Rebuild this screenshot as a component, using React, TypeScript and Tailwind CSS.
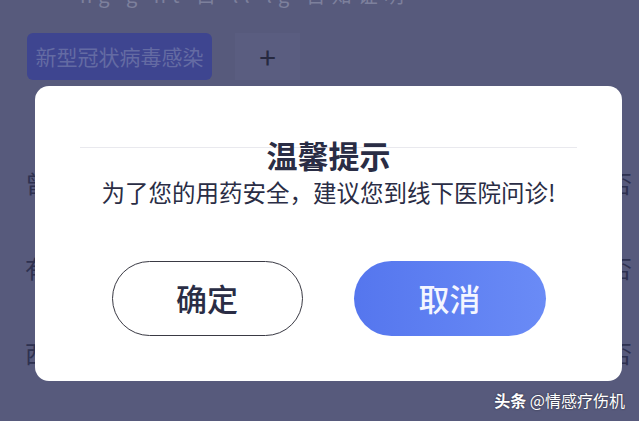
const rows = ["曾", "有", "西"];

const App = () => {
  return (
    <div
      className="relative w-[639px] h-[421px] overflow-hidden bg-[#575a7c]"
      style={{ fontFamily: '"Noto Sans CJK SC", "Noto Sans", sans-serif' }}
    >
      {/* page behind the overlay, top line scrolled mostly out of view */}
      <div className="-mt-[17px] h-[24px] pl-[80px] text-[20px] leading-[24px] text-[#7d809c] tracking-[6px]">
        ng g nt 目 ll lg 告知证明
      </div>

      <div className="flex mt-[26px] pl-[27px]">
        <div className="flex items-center justify-center w-[185px] h-[47px] rounded-[6px] bg-[#3e4590] text-[21px] text-[#646ba3]">
          新型冠状病毒感染
        </div>
        <div className="flex items-center justify-center w-[65px] h-[47px] ml-[23px] bg-[#5a5d80] text-[30px] text-[#262940]">
          +
        </div>
      </div>

      <div className="flex flex-col gap-[55px] mt-[88px]">
        {rows.map((r) => (
          <div key={r} className="flex justify-between pl-[25px] pr-[7px] h-[30px] text-[24px] leading-[30px] text-[#2e3150]">
            <span>{r}</span>
            <span>否</span>
          </div>
        ))}
      </div>

      {/* dialog */}
      <div className="absolute left-[35px] top-[86px] w-[587px] h-[295px] rounded-[14px] bg-white flex flex-col items-center">
        <div className="mt-[61px] self-stretch mx-[45px] h-px bg-[#e9e9ee]" />
        <div className="-mt-[12px] text-[31px] leading-[37px] font-bold text-[#2a2d45]">温馨提示</div>
        <div className="mt-[5px] text-[23.5px] leading-[29px] text-[#2a2d45]">
          为了您的用药安全，建议您到线下医院问诊!
        </div>
        <div className="flex gap-[51px] mt-[54px]">
          <button className="w-[191px] h-[75px] rounded-full border border-[#3a3a44] bg-white text-[31px] font-medium text-[#2a2d45]">
            确定
          </button>
          <button className="w-[192px] h-[75px] rounded-full bg-gradient-to-r from-[#5576ee] to-[#6a8bf6] text-[31px] font-medium text-[#f4f6ff]">
            取消
          </button>
        </div>
      </div>

      <div className="absolute right-[14px] top-[389px] text-[16px] leading-[22px] text-white [text-shadow:0_0_2px_rgba(0,0,0,0.6)]">
        <span className="font-bold">头条</span> @情感疗伤机
      </div>
    </div>
  );
};

export default App;
